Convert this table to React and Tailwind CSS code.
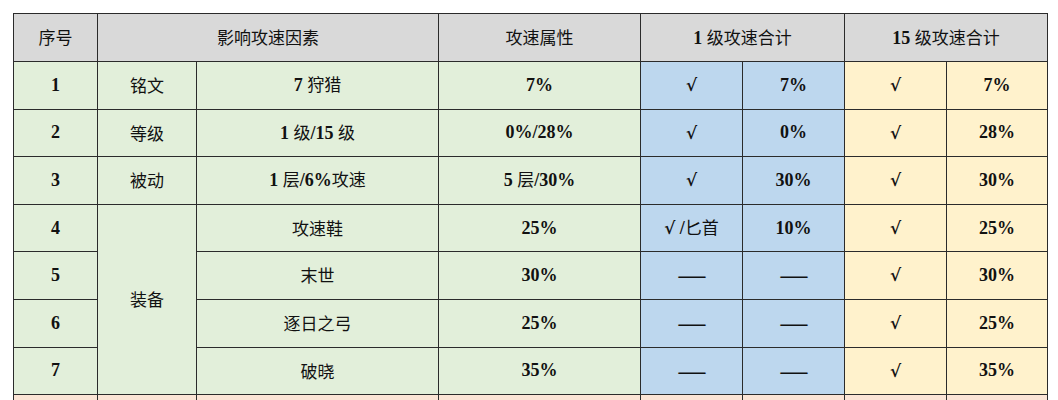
const GRAY = "bg-[#d9d9d9]"
const GREEN = "bg-[#e2efda]"
const BLUE = "bg-[#bdd7ee]"
const YELLOW = "bg-[#fff2cc]"
const PINK = "bg-[#fbe4d5]"

// latin runs (digits, %, /) are bold serif, chinese runs regular sans
const Txt = ({ children }) => {
  const parts = String(children).split(/([\u4e00-\u9fff]+|\u2014+|\u221a)/).filter(Boolean)
  return parts.map((p, i) => {
    if (p === "\u221a")
      return (
        <span key={i} className="font-bold text-[17px] [font-family:'DejaVu_Serif',serif]">{p}</span>
      )
    if (/\u2014/.test(p))
      return (
        <span key={i} className="font-bold tracking-[-1px] [font-family:'Noto_Sans_CJK_SC',sans-serif]">{p}</span>
      )
    if (/[\u4e00-\u9fff]/.test(p))
      return (
        <span key={i} className="font-normal [font-family:'Noto_Sans_CJK_SC',sans-serif]">{p}</span>
      )
    return (
      <span key={i} className="font-bold text-[18px] [font-family:'Liberation_Serif',serif]">{p}</span>
    )
  })
}

const Cell = ({ children, bg, ...rest }) => (
  <td
    {...rest}
    className={`${bg} border border-[#2b2b2b] text-center align-middle p-0 text-[17px] text-[#111]`}
  >
    {children !== undefined && <Txt>{children}</Txt>}
  </td>
)

const rows = [
  ["1", "铭文", "7 狩猎", "7%", "√", "7%", "√", "7%"],
  ["2", "等级", "1 级/15 级", "0%/28%", "√", "0%", "√", "28%"],
  ["3", "被动", "1 层/6%攻速", "5 层/30%", "√", "30%", "√", "30%"],
  ["4", "装备", "攻速鞋", "25%", "√ /匕首", "10%", "√", "25%"],
  ["5", null, "末世", "30%", "——", "——", "√", "30%"],
  ["6", null, "逐日之弓", "25%", "——", "——", "√", "25%"],
  ["7", null, "破晓", "35%", "——", "——", "√", "35%"],
]

export default function App() {
  return (
    <div className="w-[1058px] h-[400px] overflow-hidden bg-white pt-[13px] pl-[13px]">
      <table className="border-collapse table-fixed w-[1034px] border border-[#2b2b2b]">
        <colgroup>
          <col className="w-[84px]" />
          <col className="w-[99px]" />
          <col className="w-[242px]" />
          <col className="w-[202px]" />
          <col className="w-[102px]" />
          <col className="w-[102px]" />
          <col className="w-[102px]" />
          <col className="w-[101px]" />
        </colgroup>
        <tbody>
          <tr className="h-[48px]">
            <Cell bg={GRAY}>序号</Cell>
            <Cell bg={GRAY} colSpan={2}>影响攻速因素</Cell>
            <Cell bg={GRAY}>攻速属性</Cell>
            <Cell bg={GRAY} colSpan={2}>1 级攻速合计</Cell>
            <Cell bg={GRAY} colSpan={2}>15 级攻速合计</Cell>
          </tr>
          {rows.map((r) => (
            <tr key={r[0]} className="h-[47.6px]">
              <Cell bg={GREEN}>{r[0]}</Cell>
              {r[1] !== null && (
                <Cell bg={GREEN} rowSpan={r[1] === "装备" ? 4 : 1}>{r[1]}</Cell>
              )}
              <Cell bg={GREEN}>{r[2]}</Cell>
              <Cell bg={GREEN}>{r[3]}</Cell>
              <Cell bg={BLUE}>{r[4]}</Cell>
              <Cell bg={BLUE}>{r[5]}</Cell>
              <Cell bg={YELLOW}>{r[6]}</Cell>
              <Cell bg={YELLOW}>{r[7]}</Cell>
            </tr>
          ))}
          <tr className="h-[48px]">
            <Cell bg={PINK} />
            <Cell bg={PINK} />
            <Cell bg={PINK} />
            <Cell bg={PINK} />
            <Cell bg={PINK} />
            <Cell bg={PINK} />
            <Cell bg={PINK} />
            <Cell bg={PINK} />
          </tr>
        </tbody>
      </table>
    </div>
  )
}
